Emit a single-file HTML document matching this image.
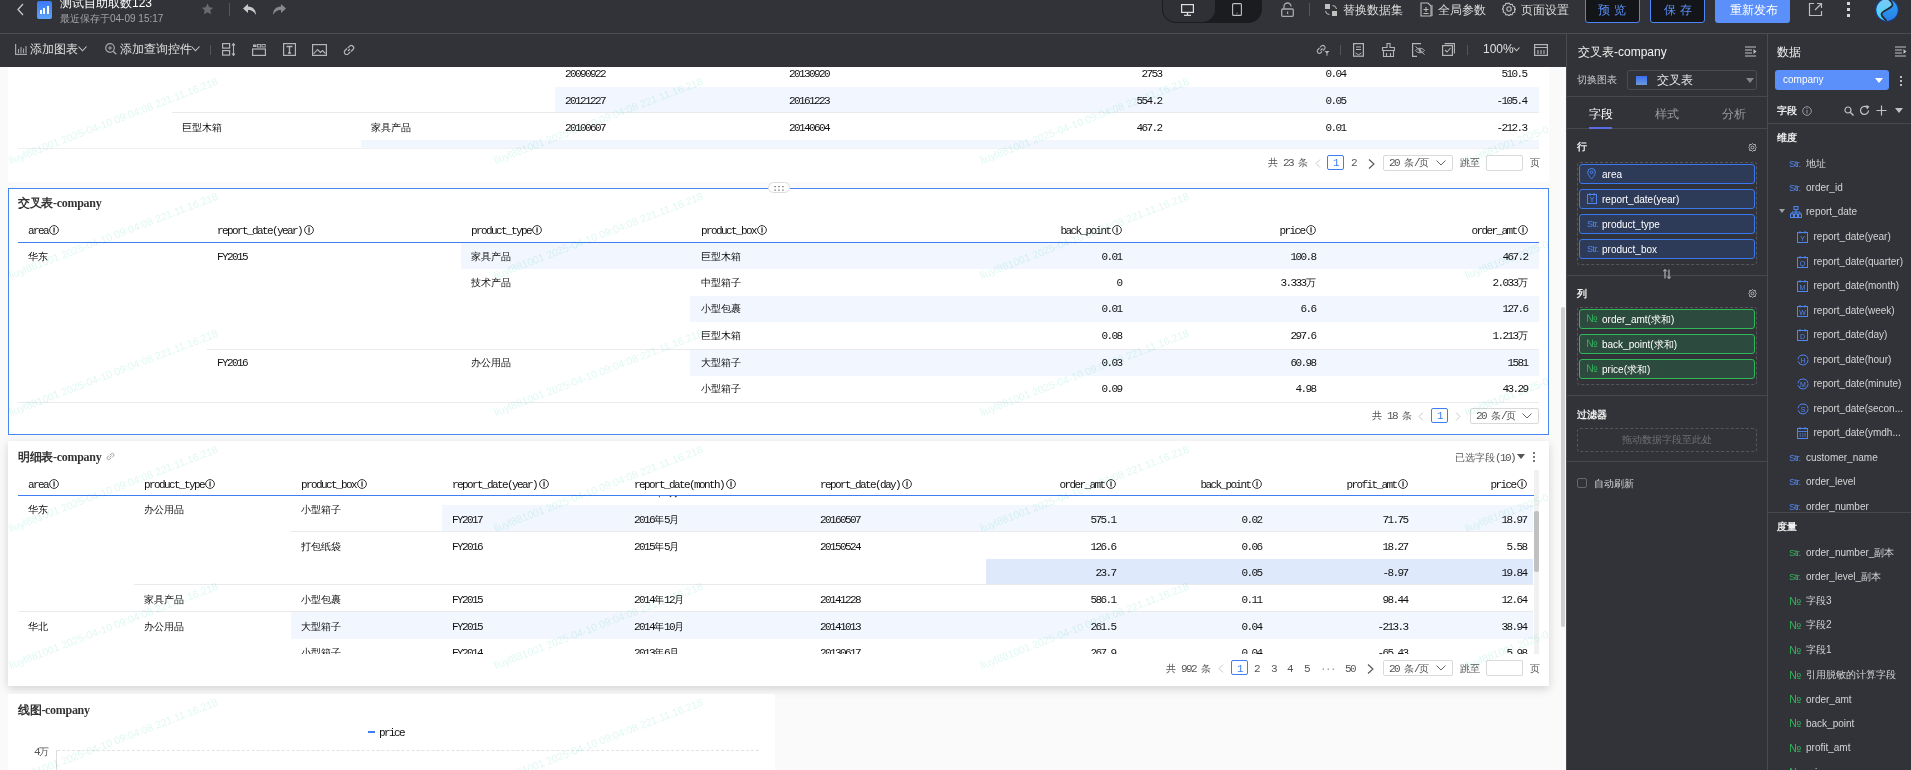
<!DOCTYPE html>
<html><head><meta charset="utf-8">
<style>
*{box-sizing:border-box}
html,body{margin:0;padding:0}
body{width:1911px;height:770px;overflow:hidden;position:relative;background:#fafafa;font-family:"Liberation Sans",sans-serif}
.a{position:absolute}
.top{left:0;top:0;width:1911px;height:33px;background:#323338}
.hsep{left:0;top:33px;width:1911px;height:1px;background:#4c4d52}
.tool{left:0;top:34px;width:1566px;height:33px;background:#323338}
.wt{color:#e6e6e6;font-size:12px;line-height:14px;white-space:nowrap}
.gt{color:#bdbdbd}
.canvas{left:0;top:67px;width:1566px;height:703px;background:#fafafa;overflow:hidden}
.p1{left:1566px;top:34px;width:202px;height:736px;background:#323338;border-left:1px solid #4c4d52;border-right:1px solid #4c4d52}
.p2{left:1768px;top:34px;width:143px;height:736px;background:#323338}
.card{background:#fff}
.m{font-family:"Liberation Mono",monospace;font-size:11px;letter-spacing:-1.6px;color:#111;white-space:nowrap;line-height:12px}
.m .c, .c{letter-spacing:0}
.r{text-align:right}
.stripe{background:#f2f6fe}
.line{background:#e8e9ec;height:1px}
.hd{color:#111}
.pg{color:#555}
.wm{mix-blend-mode:multiply;font-family:"Liberation Sans",sans-serif;font-size:10.5px;line-height:10px;white-space:nowrap;color:#e0f8f3;transform:rotate(-21deg);transform-origin:0 100%}
.cj{font-size:10px;letter-spacing:0}
.ttl{font-family:"Liberation Serif",serif;font-weight:bold;font-size:12px;line-height:12px;color:#333;white-space:nowrap;letter-spacing:-0.3px}
</style></head><body>
<!-- TOP BAR -->
<div class="a top"></div>
<div class="a hsep"></div>
<div class="a tool"></div>
<!-- top bar content -->
<svg class="a" style="left:16px;top:3px" width="9" height="13" viewBox="0 0 9 13"><polyline points="7,1 2,6.5 7,12" fill="none" stroke="#c8c8c8" stroke-width="1.3"/></svg>
<div class="a" style="left:37px;top:1px;width:15px;height:18px;border-radius:2px;background:linear-gradient(#3b79f6,#5ba3fb)"></div>
<div class="a" style="left:40px;top:10px;width:2px;height:4px;background:#fff"></div>
<div class="a" style="left:43px;top:8px;width:2px;height:6px;background:#fff"></div>
<div class="a" style="left:46.5px;top:6px;width:2px;height:8px;background:#fff"></div>
<div class="a wt" style="left:60px;top:-4px;font-size:12px;line-height:14px;color:#fff">测试自助取数123</div>
<div class="a wt" style="left:60px;top:12.5px;font-size:10px;line-height:12px;color:#a3a3a6">最近保存于04-09 15:17</div>
<svg class="a" style="left:201px;top:3px" width="13" height="12" viewBox="0 0 24 23"><path d="M12 1l3.3 7 7.7.9-5.7 5.2 1.6 7.6L12 17.9l-6.9 3.8 1.6-7.6L1 8.9l7.7-.9z" fill="#6a6b70"/></svg>
<div class="a" style="left:229px;top:3px;width:1px;height:13px;background:#55565b"></div>
<svg class="a" style="left:242px;top:3px" width="15" height="13" viewBox="0 0 15 13"><path d="M6 1L1 5.5 6 10V7c4 0 6 1.5 8 5 0-5-3-8.5-8-8.5z" fill="#c9c9cc"/></svg>
<svg class="a" style="left:272px;top:3px" width="15" height="13" viewBox="0 0 15 13"><path d="M9 1l5 4.5L9 10V7c-4 0-6 1.5-8 5 0-5 3-8.5 8-8.5z" fill="#88898d"/></svg>
<!-- device toggle -->
<div class="a" style="left:1162px;top:-12px;width:100px;height:35px;border-radius:14px;background:#1b1c1f"></div>
<div class="a" style="left:1163px;top:-12px;width:52px;height:34px;border-radius:13px;background:#2f3035"></div>
<svg class="a" style="left:1181px;top:4px" width="13" height="12" viewBox="0 0 13 12"><rect x="0.6" y="0.6" width="11.8" height="7.8" fill="none" stroke="#e0e0e0" stroke-width="1.2"/><line x1="6.5" y1="8.5" x2="6.5" y2="11" stroke="#e0e0e0" stroke-width="1.2"/><line x1="3" y1="11.3" x2="10" y2="11.3" stroke="#e0e0e0" stroke-width="1.2"/></svg>
<svg class="a" style="left:1232px;top:3px" width="10" height="13" viewBox="0 0 10 13"><rect x="0.6" y="0.6" width="8.8" height="11.8" rx="1" fill="none" stroke="#c0c0c0" stroke-width="1.1"/><circle cx="5" cy="10" r="0.6" fill="#c0c0c0"/></svg>
<svg class="a" style="left:1281px;top:2px" width="13" height="15" viewBox="0 0 13 15"><path d="M3 7V4.5a3.5 3.5 0 0 1 7 0" fill="none" stroke="#a9a9ad" stroke-width="1.3"/><rect x="0.7" y="7" width="11.6" height="7.3" rx="1" fill="none" stroke="#a9a9ad" stroke-width="1.3"/><rect x="6" y="9.5" width="1.2" height="2.5" fill="#a9a9ad"/></svg>
<div class="a" style="left:1309px;top:3px;width:1px;height:13px;background:#55565b"></div>
<svg class="a" style="left:1324px;top:3px" width="14" height="14" viewBox="0 0 14 14"><rect x="1" y="1" width="5" height="5" fill="#c0c0c0"/><rect x="8" y="8" width="5" height="5" fill="#c0c0c0"/><path d="M8.5 2.5a4 4 0 0 1 4 3.5M5.5 11.5a4 4 0 0 1-4-3.5" fill="none" stroke="#c0c0c0" stroke-width="1"/></svg>
<div class="a wt" style="left:1343px;top:3px;color:#dcdcdc">替换数据集</div>
<svg class="a" style="left:1420px;top:2px" width="13" height="15" viewBox="0 0 13 15"><path d="M1 1h7l3 3v10H1z" fill="none" stroke="#bdbdbd" stroke-width="1.1"/><path d="M12 3v11" stroke="#bdbdbd" stroke-width="1"/><path d="M6 5v5M3.5 7.5h5M3.5 11.5h5" stroke="#bdbdbd" stroke-width="1"/></svg>
<div class="a wt" style="left:1438px;top:3px;color:#dcdcdc">全局参数</div>
<svg class="a" style="left:1502px;top:2px" width="14" height="14" viewBox="0 0 14 14"><path d="M7 1l1.3 1.6 2-.3.6 1.9 1.9.7-.3 2L14 7l-1.5 1.2.3 2-1.9.6-.7 1.9-2-.3L7 14l-1.2-1.5-2 .3-.6-1.9-1.9-.7.3-2L0 7l1.5-1.2-.3-2 1.9-.6.7-1.9 2 .3z" fill="none" stroke="#bdbdbd" stroke-width="1.1"/><circle cx="7" cy="7" r="2.2" fill="none" stroke="#bdbdbd" stroke-width="1.1"/></svg>
<div class="a wt" style="left:1521px;top:3px;color:#dcdcdc">页面设置</div>
<div class="a" style="left:1585px;top:-6px;width:55px;height:29px;border:1px solid #4d86f7;border-radius:3px;background:#141518"></div>
<div class="a wt" style="left:1598px;top:3px;color:#5a8ff8;letter-spacing:4px;font-size:12px">预览</div>
<div class="a" style="left:1650px;top:-6px;width:55px;height:29px;border:1px solid #4d86f7;border-radius:3px;background:#141518"></div>
<div class="a wt" style="left:1664px;top:3px;color:#5a8ff8;letter-spacing:4px;font-size:12px">保存</div>
<div class="a" style="left:1715px;top:-6px;width:75px;height:29px;border-radius:3px;background:#5b8ff9"></div>
<div class="a wt" style="left:1730px;top:3px;color:#fff">重新发布</div>
<svg class="a" style="left:1808px;top:2px" width="15" height="15" viewBox="0 0 15 15"><path d="M6 1.5H1.5v12h12V9" fill="none" stroke="#bdbdbd" stroke-width="1.2"/><path d="M7 8l6.5-6.5M9 1.5h4.5V6" fill="none" stroke="#bdbdbd" stroke-width="1.2"/></svg>
<div class="a" style="left:1847px;top:2px;width:3px;height:3px;background:#d8d8d8"></div>
<div class="a" style="left:1847px;top:8px;width:3px;height:3px;background:#d8d8d8"></div>
<div class="a" style="left:1847px;top:14px;width:3px;height:3px;background:#d8d8d8"></div>
<svg class="a" style="left:1875px;top:-2px" width="24" height="24" viewBox="0 0 24 24"><defs><linearGradient id="lg1" x1="0" y1="0" x2="0" y2="1"><stop offset="0" stop-color="#7fc8f5"/><stop offset="1" stop-color="#3fd8f8"/></linearGradient><linearGradient id="lg2" x1="0" y1="0" x2="0" y2="1"><stop offset="0" stop-color="#2aa7f4"/><stop offset="1" stop-color="#2a7fe8"/></linearGradient></defs><circle cx="12" cy="12" r="11.8" fill="#1d3f8f"/><circle cx="12" cy="12" r="10.7" fill="url(#lg2)"/><path d="M13 1.3C15 2.5 19 5 17 8C15 11 6 13 6.5 16.5C7 19 9 20.5 11.5 22.7A10.7 10.7 0 0 1 13 1.3Z" fill="url(#lg1)"/><path d="M13 0.8C15 2.3 19 5 17 8C15 11 6 13 6.5 16.5C7 19 9 20.5 11.5 22.5" fill="none" stroke="#26272b" stroke-width="1.7"/></svg>


<!-- toolbar row -->
<svg class="a" style="left:15px;top:44px" width="12" height="11" viewBox="0 0 12 11"><path d="M0.6 0v10.4H12" fill="none" stroke="#a6a6aa" stroke-width="1.2"/><path d="M3.5 5v4M6 3v6M8.5 4.5v4.5M11 2v7" stroke="#a6a6aa" stroke-width="1.1"/></svg>
<div class="a wt" style="left:30px;top:42px;color:#e0e0e0">添加图表</div>
<svg class="a" style="left:78px;top:46px" width="9" height="6" viewBox="0 0 9 6"><polyline points="0.5,0.5 4.5,4.8 8.5,0.5" fill="none" stroke="#c8c8c8" stroke-width="1.1"/></svg>
<svg class="a" style="left:105px;top:43px" width="12" height="12" viewBox="0 0 12 12"><circle cx="5" cy="5" r="4.3" fill="none" stroke="#a6a6aa" stroke-width="1.2"/><line x1="8.2" y1="8.2" x2="11.3" y2="11.3" stroke="#a6a6aa" stroke-width="1.3"/><path d="M5 3v4M3 5h4" stroke="#a6a6aa" stroke-width="1"/></svg>
<div class="a wt" style="left:120px;top:42px;color:#e0e0e0">添加查询控件</div>
<svg class="a" style="left:191px;top:46px" width="9" height="6" viewBox="0 0 9 6"><polyline points="0.5,0.5 4.5,4.8 8.5,0.5" fill="none" stroke="#c8c8c8" stroke-width="1.1"/></svg>
<div class="a" style="left:210px;top:45px;width:1px;height:10px;background:#55565b"></div>
<svg class="a" style="left:222px;top:43px" width="14" height="13" viewBox="0 0 14 13"><rect x="0.6" y="0.6" width="7" height="4.5" fill="none" stroke="#b5b5b8" stroke-width="1.2"/><rect x="0.6" y="7.6" width="7" height="4.5" fill="none" stroke="#b5b5b8" stroke-width="1.2"/><path d="M11.5 0.5v12M10 2.5l1.5-2 1.5 2M10 10.5l1.5 2 1.5-2" fill="none" stroke="#b5b5b8" stroke-width="1.1"/></svg>
<svg class="a" style="left:252px;top:44px" width="14" height="12" viewBox="0 0 14 12"><rect x="0.6" y="5" width="12.8" height="6.4" fill="none" stroke="#b5b5b8" stroke-width="1.2"/><rect x="1" y="0.5" width="3.5" height="2.5" fill="#b5b5b8"/><rect x="5.5" y="0.5" width="3.2" height="2.5" fill="none" stroke="#b5b5b8" stroke-width="0.9"/><rect x="10" y="0.5" width="3.2" height="2.5" fill="none" stroke="#b5b5b8" stroke-width="0.9"/></svg>
<svg class="a" style="left:283px;top:43px" width="13" height="13" viewBox="0 0 13 13"><rect x="0.6" y="0.6" width="11.8" height="11.8" fill="none" stroke="#b5b5b8" stroke-width="1.2"/><path d="M3.5 3.5h6M6.5 3.5v6.5M5 10h3" fill="none" stroke="#b5b5b8" stroke-width="1.3"/></svg>
<svg class="a" style="left:312px;top:44px" width="15" height="12" viewBox="0 0 15 12"><rect x="0.6" y="0.6" width="13.8" height="10.8" fill="none" stroke="#b5b5b8" stroke-width="1.2"/><path d="M1.5 10l4-4.5 3 3 2-2 3 3" fill="none" stroke="#b5b5b8" stroke-width="1.1"/></svg>
<svg class="a" style="left:342px;top:43px" width="14" height="14" viewBox="0 0 14 14"><path d="M6 8l2-2M5 5.5L3 7.5a2.3 2.3 0 0 0 3.3 3.3l2-2M9 8.5l2-2a2.3 2.3 0 0 0-3.3-3.3l-2 2" fill="none" stroke="#b5b5b8" stroke-width="1.2"/></svg>

<svg class="a" style="left:1315px;top:43px" width="15" height="13" viewBox="0 0 15 13"><path d="M5.5 7.5l2-2M4.5 5L2.5 7a2.2 2.2 0 0 0 3 3l1.5-1.5M8 7.5l1.8-1.8a2.2 2.2 0 0 0-3-3L5 4.3" fill="none" stroke="#b5b5b8" stroke-width="1.1"/><path d="M9.5 8h5l-2 2.3v2.5h-1v-2.5z" fill="#b5b5b8"/></svg>
<div class="a" style="left:1340px;top:45px;width:1px;height:10px;background:#55565b"></div>
<svg class="a" style="left:1353px;top:43px" width="11" height="14" viewBox="0 0 11 14"><rect x="0.6" y="0.6" width="9.8" height="12.6" fill="none" stroke="#b5b5b8" stroke-width="1.2"/><path d="M3 4h5M3 6.5h5M2.5 10l3 1.8 3-1.8" fill="none" stroke="#b5b5b8" stroke-width="1"/></svg>
<svg class="a" style="left:1382px;top:43px" width="13" height="14" viewBox="0 0 13 14"><path d="M5 0.5h3v4h4.4v3H0.6v-3H5zM1.5 7.5v6h10v-6M4.5 10v3.5M8.5 10v3.5" fill="none" stroke="#b5b5b8" stroke-width="1.1"/></svg>
<svg class="a" style="left:1412px;top:43px" width="14" height="14" viewBox="0 0 14 14"><path d="M9 0.6H0.6v12.8H5" fill="none" stroke="#b5b5b8" stroke-width="1.2"/><path d="M3.5 7.5c2.5-3 6.5-3 9 0-2.5 3-6.5 3-9 0z" fill="none" stroke="#b5b5b8" stroke-width="1"/><circle cx="8" cy="7.5" r="1.3" fill="#b5b5b8"/><line x1="3.5" y1="3.5" x2="12.5" y2="11.5" stroke="#b5b5b8" stroke-width="1"/></svg>
<svg class="a" style="left:1442px;top:43px" width="13" height="13" viewBox="0 0 13 13"><rect x="0.6" y="2.6" width="9.8" height="9.8" fill="none" stroke="#b5b5b8" stroke-width="1.2"/><path d="M2.6 0.6h9.8v9.8" fill="none" stroke="#b5b5b8" stroke-width="1.1"/><path d="M3 7l2 2 3.5-4" fill="none" stroke="#b5b5b8" stroke-width="1.1"/></svg>
<div class="a" style="left:1467px;top:45px;width:1px;height:10px;background:#55565b"></div>
<div class="a wt" style="left:1483px;top:42px;color:#e0e0e0;font-size:12px">100%</div>
<svg class="a" style="left:1513px;top:47px" width="7" height="5" viewBox="0 0 7 5"><polyline points="0.5,0.5 3.5,3.8 6.5,0.5" fill="none" stroke="#c8c8c8" stroke-width="1.1"/></svg>
<svg class="a" style="left:1534px;top:44px" width="14" height="12" viewBox="0 0 14 12"><rect x="0.6" y="0.6" width="12.8" height="10.8" fill="none" stroke="#b5b5b8" stroke-width="1.2"/><path d="M0.6 3.5h12.8M4 6v4M7 6v4M10 6v4" stroke="#b5b5b8" stroke-width="1.1"/></svg>
<div class="a" style="left:0;top:67px;width:1566px;height:703px;overflow:hidden;background:#fafafa"><div class="a" style="left:0;top:-67px;width:1566px;height:770px">
<div class="a" style="left:8px;top:40px;width:1541px;height:142px;background:#fff;"></div>
<div class="a" style="left:555px;top:87px;width:984px;height:26px;background:#f2f6fe;"></div>
<div class="a" style="left:172px;top:112px;width:1367px;height:1px;background:#e9eaed;"></div>
<div class="a" style="left:361px;top:140px;width:1178px;height:8px;background:#f2f6fe;"></div>
<div class="a" style="left:18px;top:148px;width:1521px;height:1px;background:#f0f0f2;"></div>
<div class="a m" style="left:565px;top:68px;">20090922</div>
<div class="a m" style="left:789px;top:68px;">20130920</div>
<div class="a m" style="left:1161.5px;top:68px;transform:translateX(-100%);">2753</div>
<div class="a m" style="left:1345.5px;top:68px;transform:translateX(-100%);">0.04</div>
<div class="a m" style="left:1526.5px;top:68px;transform:translateX(-100%);">510.5</div>
<div class="a m" style="left:565px;top:94.5px;">20121227</div>
<div class="a m" style="left:789px;top:94.5px;">20161223</div>
<div class="a m" style="left:1161.5px;top:94.5px;transform:translateX(-100%);">554.2</div>
<div class="a m" style="left:1345.5px;top:94.5px;transform:translateX(-100%);">0.05</div>
<div class="a m" style="left:1526.5px;top:94.5px;transform:translateX(-100%);">-105.4</div>
<div class="a m" style="left:182px;top:121.5px;"><span class="cj">巨型木箱</span></div>
<div class="a m" style="left:371px;top:121.5px;"><span class="cj">家具产品</span></div>
<div class="a m" style="left:565px;top:121.5px;">20100607</div>
<div class="a m" style="left:789px;top:121.5px;">20140604</div>
<div class="a m" style="left:1161.5px;top:121.5px;transform:translateX(-100%);">467.2</div>
<div class="a m" style="left:1345.5px;top:121.5px;transform:translateX(-100%);">0.01</div>
<div class="a m" style="left:1526.5px;top:121.5px;transform:translateX(-100%);">-212.3</div>
<div class="a m pg" style="left:1268px;top:157px;"><span class="cj">共</span>&nbsp;23&nbsp;<span class="cj">条</span></div>
<svg class="a" style="left:1315px;top:159px" width="6" height="9" viewBox="0 0 6 9"><polyline points="5,0.5 1,4.5 5,8.5" fill="none" stroke="#c8c8c8" stroke-width="1"/></svg>
<div class="a" style="left:1327px;top:155px;width:17px;height:15px;border:1px solid #3d7ef2;border-radius:2px"></div>
<div class="a m pg" style="left:1333px;top:157px;color:#3d7ef2">1</div>
<div class="a m pg" style="left:1351px;top:157px;">2</div>
<svg class="a" style="left:1368px;top:159px" width="7" height="10" viewBox="0 0 7 10"><polyline points="1,0.5 6,5 1,9.5" fill="none" stroke="#555" stroke-width="1.1"/></svg>
<div class="a" style="left:1383px;top:155px;width:70px;height:16px;border:1px solid #d9d9d9;border-radius:2px;background:#fff"></div>
<div class="a m pg" style="left:1389px;top:157px;">20&nbsp;<span class="cj">条</span>/<span class="cj">页</span></div>
<svg class="a" style="left:1436px;top:160px" width="10" height="6" viewBox="0 0 10 6"><polyline points="0.5,0.5 5,5 9.5,0.5" fill="none" stroke="#666" stroke-width="1"/></svg>
<div class="a m pg" style="left:1460px;top:157px;"><span class="cj">跳至</span></div>
<div class="a" style="left:1486px;top:155px;width:37px;height:16px;border:1px solid #d9d9d9;border-radius:2px;background:#fff"></div>
<div class="a m pg" style="left:1530px;top:157px;"><span class="cj">页</span></div>
<div class="a" style="left:8px;top:188px;width:1541px;height:247px;background:#fff;border:1px solid #4a86f0"></div>
<div class="a ttl" style="left:18px;top:197px;">交叉表-company</div>
<div class="a m hd" style="left:28px;top:225px;">area<span style="letter-spacing:0"><svg width="10" height="10" viewBox="0 0 10 10" style="vertical-align:-1px;margin-left:1px"><circle cx="5" cy="5" r="4.4" fill="none" stroke="#333" stroke-width="1"/><rect x="4.4" y="2.4" width="1.3" height="5.2" fill="#333"/></svg></span></div>
<div class="a m hd" style="left:217px;top:225px;">report_date(year)<span style="letter-spacing:0"><svg width="10" height="10" viewBox="0 0 10 10" style="vertical-align:-1px;margin-left:2px"><circle cx="5" cy="5" r="4.4" fill="none" stroke="#333" stroke-width="1"/><rect x="4.4" y="2.4" width="1.3" height="5.2" fill="#333"/></svg></span></div>
<div class="a m hd" style="left:471px;top:225px;">product_type<span style="letter-spacing:0"><svg width="10" height="10" viewBox="0 0 10 10" style="vertical-align:-1px;margin-left:1px"><circle cx="5" cy="5" r="4.4" fill="none" stroke="#333" stroke-width="1"/><rect x="4.4" y="2.4" width="1.3" height="5.2" fill="#333"/></svg></span></div>
<div class="a m hd" style="left:701px;top:225px;">product_box<span style="letter-spacing:0"><svg width="10" height="10" viewBox="0 0 10 10" style="vertical-align:-1px;margin-left:1px"><circle cx="5" cy="5" r="4.4" fill="none" stroke="#333" stroke-width="1"/><rect x="4.4" y="2.4" width="1.3" height="5.2" fill="#333"/></svg></span></div>
<div class="a m hd" style="left:1121.5px;top:225px;transform:translateX(-100%);">back_point<span style="letter-spacing:0"><svg width="10" height="10" viewBox="0 0 10 10" style="vertical-align:-1px;margin-left:1px"><circle cx="5" cy="5" r="4.4" fill="none" stroke="#333" stroke-width="1"/><rect x="4.4" y="2.4" width="1.3" height="5.2" fill="#333"/></svg></span></div>
<div class="a m hd" style="left:1315.5px;top:225px;transform:translateX(-100%);">price<span style="letter-spacing:0"><svg width="10" height="10" viewBox="0 0 10 10" style="vertical-align:-1px;margin-left:1px"><circle cx="5" cy="5" r="4.4" fill="none" stroke="#333" stroke-width="1"/><rect x="4.4" y="2.4" width="1.3" height="5.2" fill="#333"/></svg></span></div>
<div class="a m hd" style="left:1527.5px;top:225px;transform:translateX(-100%);">order_amt<span style="letter-spacing:0"><svg width="10" height="10" viewBox="0 0 10 10" style="vertical-align:-1px;margin-left:1px"><circle cx="5" cy="5" r="4.4" fill="none" stroke="#333" stroke-width="1"/><rect x="4.4" y="2.4" width="1.3" height="5.2" fill="#333"/></svg></span></div>
<div class="a" style="left:18px;top:242px;width:1521px;height:1px;background:#3d7ef2;"></div>
<div class="a" style="left:461px;top:243px;width:1078px;height:26px;background:#f2f6fe;"></div>
<div class="a" style="left:690px;top:296px;width:849px;height:26px;background:#f2f6fe;"></div>
<div class="a" style="left:690px;top:349px;width:849px;height:27px;background:#f2f6fe;"></div>
<div class="a" style="left:207px;top:348.5px;width:1332px;height:1px;background:#e9eaed;"></div>
<div class="a" style="left:18px;top:401.5px;width:1521px;height:1px;background:#e9eaed;"></div>
<div class="a m" style="left:28px;top:250.5px;"><span class="cj">华东</span></div>
<div class="a m" style="left:217px;top:250.5px;">FY2015</div>
<div class="a m" style="left:217px;top:356.5px;">FY2016</div>
<div class="a m" style="left:471px;top:250.5px;"><span class="cj">家具产品</span></div>
<div class="a m" style="left:471px;top:276.5px;"><span class="cj">技术产品</span></div>
<div class="a m" style="left:471px;top:356.5px;"><span class="cj">办公用品</span></div>
<div class="a m" style="left:701px;top:250.5px;"><span class="cj">巨型木箱</span></div>
<div class="a m" style="left:1121.5px;top:250.5px;transform:translateX(-100%);">0.01</div>
<div class="a m" style="left:1315.5px;top:250.5px;transform:translateX(-100%);">100.8</div>
<div class="a m" style="left:1527.5px;top:250.5px;transform:translateX(-100%);">467.2</div>
<div class="a m" style="left:701px;top:276.5px;"><span class="cj">中型箱子</span></div>
<div class="a m" style="left:1121.5px;top:276.5px;transform:translateX(-100%);">0</div>
<div class="a m" style="left:1315.5px;top:276.5px;transform:translateX(-100%);">3.333<span class="cj">万</span></div>
<div class="a m" style="left:1527.5px;top:276.5px;transform:translateX(-100%);">2.033<span class="cj">万</span></div>
<div class="a m" style="left:701px;top:303px;"><span class="cj">小型包裹</span></div>
<div class="a m" style="left:1121.5px;top:303px;transform:translateX(-100%);">0.01</div>
<div class="a m" style="left:1315.5px;top:303px;transform:translateX(-100%);">6.6</div>
<div class="a m" style="left:1527.5px;top:303px;transform:translateX(-100%);">127.6</div>
<div class="a m" style="left:701px;top:330px;"><span class="cj">巨型木箱</span></div>
<div class="a m" style="left:1121.5px;top:330px;transform:translateX(-100%);">0.08</div>
<div class="a m" style="left:1315.5px;top:330px;transform:translateX(-100%);">297.6</div>
<div class="a m" style="left:1527.5px;top:330px;transform:translateX(-100%);">1.213<span class="cj">万</span></div>
<div class="a m" style="left:701px;top:356.5px;"><span class="cj">大型箱子</span></div>
<div class="a m" style="left:1121.5px;top:356.5px;transform:translateX(-100%);">0.03</div>
<div class="a m" style="left:1315.5px;top:356.5px;transform:translateX(-100%);">60.98</div>
<div class="a m" style="left:1527.5px;top:356.5px;transform:translateX(-100%);">1581</div>
<div class="a m" style="left:701px;top:383px;"><span class="cj">小型箱子</span></div>
<div class="a m" style="left:1121.5px;top:383px;transform:translateX(-100%);">0.09</div>
<div class="a m" style="left:1315.5px;top:383px;transform:translateX(-100%);">4.98</div>
<div class="a m" style="left:1527.5px;top:383px;transform:translateX(-100%);">43.29</div>
<div class="a m pg" style="left:1372px;top:410px;"><span class="cj">共</span>&nbsp;18&nbsp;<span class="cj">条</span></div>
<svg class="a" style="left:1418px;top:412px" width="6" height="9" viewBox="0 0 6 9"><polyline points="5,0.5 1,4.5 5,8.5" fill="none" stroke="#c8c8c8" stroke-width="1"/></svg>
<div class="a" style="left:1431px;top:408px;width:17px;height:15px;border:1px solid #3d7ef2;border-radius:2px"></div>
<div class="a m pg" style="left:1437px;top:410px;color:#3d7ef2">1</div>
<svg class="a" style="left:1455px;top:412px" width="6" height="9" viewBox="0 0 6 9"><polyline points="1,0.5 5,4.5 1,8.5" fill="none" stroke="#c8c8c8" stroke-width="1"/></svg>
<div class="a" style="left:1470px;top:408px;width:69px;height:16px;border:1px solid #d9d9d9;border-radius:2px;background:#fff"></div>
<div class="a m pg" style="left:1476px;top:410px;">20&nbsp;<span class="cj">条</span>/<span class="cj">页</span></div>
<svg class="a" style="left:1522px;top:413px" width="10" height="6" viewBox="0 0 10 6"><polyline points="0.5,0.5 5,5 9.5,0.5" fill="none" stroke="#666" stroke-width="1"/></svg>
<div class="a" style="left:768px;top:182px;width:22px;height:11px;border:1px solid #dcdcdc;border-radius:6px;background:#fff"></div>
<svg class="a" style="left:774px;top:185.8px" width="10" height="5" viewBox="0 0 10 5"><g fill="#555"><rect x="0.5" y="0" width="1.2" height="1.2"/><rect x="4.4" y="0" width="1.2" height="1.2"/><rect x="8.3" y="0" width="1.2" height="1.2"/><rect x="0.5" y="3.5" width="1.2" height="1.2"/><rect x="4.4" y="3.5" width="1.2" height="1.2"/><rect x="8.3" y="3.5" width="1.2" height="1.2"/></g></svg>
<div class="a" style="left:8px;top:441px;width:1541px;height:245px;background:#fff;box-shadow:0 3px 9px rgba(0,0,0,0.16)"></div>
<div class="a ttl" style="left:18px;top:451px;">明细表-company</div>
<svg class="a" style="left:106px;top:452px" width="9" height="9" viewBox="0 0 9 9"><path d="M3.5 5.5l2-2M3 3.5L1.5 5a1.5 1.5 0 0 0 2.2 2.2L5 6M6 5.5l1.5-1.5a1.5 1.5 0 0 0-2.2-2.2L4 3" fill="none" stroke="#999" stroke-width="0.9"/></svg>
<div class="a m pg" style="left:1455px;top:452px;"><span class="cj">已选字段</span>(10)</div>
<svg class="a" style="left:1517px;top:454px" width="8" height="5" viewBox="0 0 8 5"><polygon points="0,0 8,0 4,5" fill="#555"/></svg>
<div class="a" style="left:1533px;top:452px;width:1.5px;height:1.5px;background:#777;"></div>
<div class="a" style="left:1533px;top:456px;width:1.5px;height:1.5px;background:#777;"></div>
<div class="a" style="left:1533px;top:460px;width:1.5px;height:1.5px;background:#777;"></div>
<div class="a" style="left:8px;top:495px;width:1541px;height:159px;overflow:hidden"><div class="a" style="left:-8px;top:-495px;width:1566px;height:770px">
<div class="a" style="left:442px;top:505px;width:1091px;height:26.5px;background:#f2f6fe;"></div>
<div class="a" style="left:291px;top:531px;width:1242px;height:1px;background:#e9eaed;"></div>
<div class="a" style="left:986px;top:559px;width:547px;height:25.5px;background:#dfe9fc;"></div>
<div class="a" style="left:134px;top:584px;width:1399px;height:1px;background:#e9eaed;"></div>
<div class="a" style="left:18px;top:611px;width:1515px;height:1px;background:#e9eaed;"></div>
<div class="a" style="left:291px;top:611.5px;width:1242px;height:27px;background:#f2f6fe;"></div>
<div class="a" style="left:18px;top:654px;width:1515px;height:1px;background:#f0f0f2;"></div>
<div class="a m" style="left:452px;top:487px;">FY2017</div>
<div class="a m" style="left:634px;top:487px;">2016<span class="cj">年</span>5<span class="cj">月</span></div>
<div class="a m" style="left:820px;top:487px;">20160507</div>
<div class="a m" style="left:452px;top:513.5px;">FY2017</div>
<div class="a m" style="left:634px;top:513.5px;">2016<span class="cj">年</span>5<span class="cj">月</span></div>
<div class="a m" style="left:820px;top:513.5px;">20160507</div>
<div class="a m" style="left:1115.5px;top:513.5px;transform:translateX(-100%);">575.1</div>
<div class="a m" style="left:1261.5px;top:513.5px;transform:translateX(-100%);">0.02</div>
<div class="a m" style="left:1407.5px;top:513.5px;transform:translateX(-100%);">71.75</div>
<div class="a m" style="left:1526.5px;top:513.5px;transform:translateX(-100%);">18.97</div>
<div class="a m" style="left:301px;top:540.5px;"><span class="cj">打包纸袋</span></div>
<div class="a m" style="left:452px;top:540.5px;">FY2016</div>
<div class="a m" style="left:634px;top:540.5px;">2015<span class="cj">年</span>5<span class="cj">月</span></div>
<div class="a m" style="left:820px;top:540.5px;">20150524</div>
<div class="a m" style="left:1115.5px;top:540.5px;transform:translateX(-100%);">126.6</div>
<div class="a m" style="left:1261.5px;top:540.5px;transform:translateX(-100%);">0.06</div>
<div class="a m" style="left:1407.5px;top:540.5px;transform:translateX(-100%);">18.27</div>
<div class="a m" style="left:1526.5px;top:540.5px;transform:translateX(-100%);">5.58</div>
<div class="a m" style="left:1115.5px;top:567px;transform:translateX(-100%);">23.7</div>
<div class="a m" style="left:1261.5px;top:567px;transform:translateX(-100%);">0.05</div>
<div class="a m" style="left:1407.5px;top:567px;transform:translateX(-100%);">-8.97</div>
<div class="a m" style="left:1526.5px;top:567px;transform:translateX(-100%);">19.84</div>
<div class="a m" style="left:144px;top:594px;"><span class="cj">家具产品</span></div>
<div class="a m" style="left:301px;top:594px;"><span class="cj">小型包裹</span></div>
<div class="a m" style="left:452px;top:594px;">FY2015</div>
<div class="a m" style="left:634px;top:594px;">2014<span class="cj">年</span>12<span class="cj">月</span></div>
<div class="a m" style="left:820px;top:594px;">20141228</div>
<div class="a m" style="left:1115.5px;top:594px;transform:translateX(-100%);">586.1</div>
<div class="a m" style="left:1261.5px;top:594px;transform:translateX(-100%);">0.11</div>
<div class="a m" style="left:1407.5px;top:594px;transform:translateX(-100%);">98.44</div>
<div class="a m" style="left:1526.5px;top:594px;transform:translateX(-100%);">12.64</div>
<div class="a m" style="left:28px;top:620.5px;"><span class="cj">华北</span></div>
<div class="a m" style="left:144px;top:620.5px;"><span class="cj">办公用品</span></div>
<div class="a m" style="left:301px;top:620.5px;"><span class="cj">大型箱子</span></div>
<div class="a m" style="left:452px;top:620.5px;">FY2015</div>
<div class="a m" style="left:634px;top:620.5px;">2014<span class="cj">年</span>10<span class="cj">月</span></div>
<div class="a m" style="left:820px;top:620.5px;">20141013</div>
<div class="a m" style="left:1115.5px;top:620.5px;transform:translateX(-100%);">261.5</div>
<div class="a m" style="left:1261.5px;top:620.5px;transform:translateX(-100%);">0.04</div>
<div class="a m" style="left:1407.5px;top:620.5px;transform:translateX(-100%);">-213.3</div>
<div class="a m" style="left:1526.5px;top:620.5px;transform:translateX(-100%);">38.94</div>
<div class="a m" style="left:301px;top:647px;"><span class="cj">小型箱子</span></div>
<div class="a m" style="left:452px;top:647px;">FY2014</div>
<div class="a m" style="left:634px;top:647px;">2013<span class="cj">年</span>6<span class="cj">月</span></div>
<div class="a m" style="left:820px;top:647px;">20130617</div>
<div class="a m" style="left:1115.5px;top:647px;transform:translateX(-100%);">267.9</div>
<div class="a m" style="left:1261.5px;top:647px;transform:translateX(-100%);">0.04</div>
<div class="a m" style="left:1407.5px;top:647px;transform:translateX(-100%);">-65.43</div>
<div class="a m" style="left:1526.5px;top:647px;transform:translateX(-100%);">5.98</div>
<div class="a m" style="left:28px;top:504px;"><span class="cj">华东</span></div>
<div class="a m" style="left:144px;top:504px;"><span class="cj">办公用品</span></div>
<div class="a m" style="left:301px;top:504px;"><span class="cj">小型箱子</span></div>
</div></div>
<div class="a m hd" style="left:28px;top:478.5px;">area<span style="letter-spacing:0"><svg width="10" height="10" viewBox="0 0 10 10" style="vertical-align:-1px;margin-left:1px"><circle cx="5" cy="5" r="4.4" fill="none" stroke="#333" stroke-width="1"/><rect x="4.4" y="2.4" width="1.3" height="5.2" fill="#333"/></svg></span></div>
<div class="a m hd" style="left:144px;top:478.5px;">product_type<span style="letter-spacing:0"><svg width="10" height="10" viewBox="0 0 10 10" style="vertical-align:-1px;margin-left:1px"><circle cx="5" cy="5" r="4.4" fill="none" stroke="#333" stroke-width="1"/><rect x="4.4" y="2.4" width="1.3" height="5.2" fill="#333"/></svg></span></div>
<div class="a m hd" style="left:301px;top:478.5px;">product_box<span style="letter-spacing:0"><svg width="10" height="10" viewBox="0 0 10 10" style="vertical-align:-1px;margin-left:1px"><circle cx="5" cy="5" r="4.4" fill="none" stroke="#333" stroke-width="1"/><rect x="4.4" y="2.4" width="1.3" height="5.2" fill="#333"/></svg></span></div>
<div class="a m hd" style="left:452px;top:478.5px;">report_date(year)<span style="letter-spacing:0"><svg width="10" height="10" viewBox="0 0 10 10" style="vertical-align:-1px;margin-left:2px"><circle cx="5" cy="5" r="4.4" fill="none" stroke="#333" stroke-width="1"/><rect x="4.4" y="2.4" width="1.3" height="5.2" fill="#333"/></svg></span></div>
<div class="a m hd" style="left:634px;top:478.5px;">report_date(month)<span style="letter-spacing:0"><svg width="10" height="10" viewBox="0 0 10 10" style="vertical-align:-1px;margin-left:2px"><circle cx="5" cy="5" r="4.4" fill="none" stroke="#333" stroke-width="1"/><rect x="4.4" y="2.4" width="1.3" height="5.2" fill="#333"/></svg></span></div>
<div class="a m hd" style="left:820px;top:478.5px;">report_date(day)<span style="letter-spacing:0"><svg width="10" height="10" viewBox="0 0 10 10" style="vertical-align:-1px;margin-left:2px"><circle cx="5" cy="5" r="4.4" fill="none" stroke="#333" stroke-width="1"/><rect x="4.4" y="2.4" width="1.3" height="5.2" fill="#333"/></svg></span></div>
<div class="a m hd" style="left:1115.5px;top:478.5px;transform:translateX(-100%);">order_amt<span style="letter-spacing:0"><svg width="10" height="10" viewBox="0 0 10 10" style="vertical-align:-1px;margin-left:1px"><circle cx="5" cy="5" r="4.4" fill="none" stroke="#333" stroke-width="1"/><rect x="4.4" y="2.4" width="1.3" height="5.2" fill="#333"/></svg></span></div>
<div class="a m hd" style="left:1261.5px;top:478.5px;transform:translateX(-100%);">back_point<span style="letter-spacing:0"><svg width="10" height="10" viewBox="0 0 10 10" style="vertical-align:-1px;margin-left:1px"><circle cx="5" cy="5" r="4.4" fill="none" stroke="#333" stroke-width="1"/><rect x="4.4" y="2.4" width="1.3" height="5.2" fill="#333"/></svg></span></div>
<div class="a m hd" style="left:1407.5px;top:478.5px;transform:translateX(-100%);">profit_amt<span style="letter-spacing:0"><svg width="10" height="10" viewBox="0 0 10 10" style="vertical-align:-1px;margin-left:1px"><circle cx="5" cy="5" r="4.4" fill="none" stroke="#333" stroke-width="1"/><rect x="4.4" y="2.4" width="1.3" height="5.2" fill="#333"/></svg></span></div>
<div class="a m hd" style="left:1526.5px;top:478.5px;transform:translateX(-100%);">price<span style="letter-spacing:0"><svg width="10" height="10" viewBox="0 0 10 10" style="vertical-align:-1px;margin-left:1px"><circle cx="5" cy="5" r="4.4" fill="none" stroke="#333" stroke-width="1"/><rect x="4.4" y="2.4" width="1.3" height="5.2" fill="#333"/></svg></span></div>
<div class="a" style="left:18px;top:495px;width:1521px;height:1px;background:#3d7ef2;"></div>
<div class="a" style="left:1534px;top:470px;width:5px;height:184px;background:#f1f1f1;"></div>
<div class="a" style="left:1534px;top:511px;width:5px;height:61px;background:#c1c1c1;border-radius:2px"></div>
<div class="a m pg" style="left:1166px;top:663px;"><span class="cj">共</span>&nbsp;992&nbsp;<span class="cj">条</span></div>
<svg class="a" style="left:1218px;top:664px" width="6" height="9" viewBox="0 0 6 9"><polyline points="5,0.5 1,4.5 5,8.5" fill="none" stroke="#c8c8c8" stroke-width="1"/></svg>
<div class="a" style="left:1231px;top:660px;width:17px;height:15px;border:1px solid #3d7ef2;border-radius:2px"></div>
<div class="a m pg" style="left:1237px;top:663px;color:#3d7ef2">1</div>
<div class="a m pg" style="left:1254px;top:663px;">2</div>
<div class="a m pg" style="left:1271px;top:663px;">3</div>
<div class="a m pg" style="left:1287px;top:663px;">4</div>
<div class="a m pg" style="left:1304px;top:663px;">5</div>
<div class="a m pg" style="left:1320px;top:663px;color:#999">···</div>
<div class="a m pg" style="left:1345px;top:663px;">50</div>
<svg class="a" style="left:1367px;top:664px" width="7" height="10" viewBox="0 0 7 10"><polyline points="1,0.5 6,5 1,9.5" fill="none" stroke="#555" stroke-width="1.1"/></svg>
<div class="a" style="left:1383px;top:660px;width:70px;height:16px;border:1px solid #d9d9d9;border-radius:2px;background:#fff"></div>
<div class="a m pg" style="left:1389px;top:663px;">20&nbsp;<span class="cj">条</span>/<span class="cj">页</span></div>
<svg class="a" style="left:1436px;top:665px" width="10" height="6" viewBox="0 0 10 6"><polyline points="0.5,0.5 5,5 9.5,0.5" fill="none" stroke="#666" stroke-width="1"/></svg>
<div class="a m pg" style="left:1460px;top:663px;"><span class="cj">跳至</span></div>
<div class="a" style="left:1486px;top:660px;width:37px;height:16px;border:1px solid #d9d9d9;border-radius:2px;background:#fff"></div>
<div class="a m pg" style="left:1530px;top:663px;"><span class="cj">页</span></div>
<div class="a" style="left:8px;top:694px;width:767px;height:100px;background:#fff;"></div>
<div class="a ttl" style="left:18px;top:704px;">线图-company</div>
<div class="a" style="left:368px;top:731px;width:7px;height:2px;background:#3d7ef2;"></div>
<div class="a m" style="left:379px;top:727px;">price</div>
<div class="a m" style="left:34px;top:746px;color:#555">4<span class="cj">万</span></div>
<div class="a" style="left:56px;top:750px;width:1px;height:30px;background:#ddd;"></div>
<div class="a" style="left:57px;top:750px;width:702px;height:0;border-top:1px dashed #e3e3e3"></div>
<div class="a" style="left:8px;top:67px;width:1541px;height:115px;overflow:hidden;pointer-events:none">
<div class="a wm" style="left:2.8000000000000007px;top:-50px">liuyl881001 2025-04-10 09:04:08 221.11.16.218</div>
<div class="a wm" style="left:488.3px;top:-50px">liuyl881001 2025-04-10 09:04:08 221.11.16.218</div>
<div class="a wm" style="left:973.8px;top:-50px">liuyl881001 2025-04-10 09:04:08 221.11.16.218</div>
<div class="a wm" style="left:1459.3px;top:-50px">liuyl881001 2025-04-10 09:04:08 221.11.16.218</div>
<div class="a wm" style="left:2.8000000000000007px;top:87.6px">liuyl881001 2025-04-10 09:04:08 221.11.16.218</div>
<div class="a wm" style="left:488.3px;top:87.6px">liuyl881001 2025-04-10 09:04:08 221.11.16.218</div>
<div class="a wm" style="left:973.8px;top:87.6px">liuyl881001 2025-04-10 09:04:08 221.11.16.218</div>
<div class="a wm" style="left:1459.3px;top:87.6px">liuyl881001 2025-04-10 09:04:08 221.11.16.218</div>
</div>
<div class="a" style="left:9px;top:189px;width:1539px;height:245px;overflow:hidden;pointer-events:none">
<div class="a wm" style="left:1.8000000000000007px;top:80.69999999999999px">liuyl881001 2025-04-10 09:04:08 221.11.16.218</div>
<div class="a wm" style="left:487.3px;top:80.69999999999999px">liuyl881001 2025-04-10 09:04:08 221.11.16.218</div>
<div class="a wm" style="left:972.8px;top:80.69999999999999px">liuyl881001 2025-04-10 09:04:08 221.11.16.218</div>
<div class="a wm" style="left:1458.3px;top:80.69999999999999px">liuyl881001 2025-04-10 09:04:08 221.11.16.218</div>
<div class="a wm" style="left:1.8000000000000007px;top:218.3px">liuyl881001 2025-04-10 09:04:08 221.11.16.218</div>
<div class="a wm" style="left:487.3px;top:218.3px">liuyl881001 2025-04-10 09:04:08 221.11.16.218</div>
<div class="a wm" style="left:972.8px;top:218.3px">liuyl881001 2025-04-10 09:04:08 221.11.16.218</div>
<div class="a wm" style="left:1458.3px;top:218.3px">liuyl881001 2025-04-10 09:04:08 221.11.16.218</div>
</div>
<div class="a" style="left:8px;top:441px;width:1541px;height:245px;overflow:hidden;pointer-events:none">
<div class="a wm" style="left:2.8000000000000007px;top:81.79999999999995px">liuyl881001 2025-04-10 09:04:08 221.11.16.218</div>
<div class="a wm" style="left:488.3px;top:81.79999999999995px">liuyl881001 2025-04-10 09:04:08 221.11.16.218</div>
<div class="a wm" style="left:973.8px;top:81.79999999999995px">liuyl881001 2025-04-10 09:04:08 221.11.16.218</div>
<div class="a wm" style="left:1459.3px;top:81.79999999999995px">liuyl881001 2025-04-10 09:04:08 221.11.16.218</div>
<div class="a wm" style="left:2.8000000000000007px;top:218.5px">liuyl881001 2025-04-10 09:04:08 221.11.16.218</div>
<div class="a wm" style="left:488.3px;top:218.5px">liuyl881001 2025-04-10 09:04:08 221.11.16.218</div>
<div class="a wm" style="left:973.8px;top:218.5px">liuyl881001 2025-04-10 09:04:08 221.11.16.218</div>
<div class="a wm" style="left:1459.3px;top:218.5px">liuyl881001 2025-04-10 09:04:08 221.11.16.218</div>
</div>
<div class="a" style="left:8px;top:694px;width:767px;height:76px;overflow:hidden;pointer-events:none">
<div class="a wm" style="left:2.8000000000000007px;top:82px">liuyl881001 2025-04-10 09:04:08 221.11.16.218</div>
<div class="a wm" style="left:488.3px;top:82px">liuyl881001 2025-04-10 09:04:08 221.11.16.218</div>
</div>
<div class="a" style="left:1561px;top:307px;width:4px;height:320px;background:#cfcfcf;border-radius:2px"></div>
</div></div>
<!-- panels -->
<div class="a" style="left:1566px;top:34px;width:345px;height:736px;background:#323338"></div>
<div class="a" style="left:1566px;top:34px;width:1px;height:736px;background:#4a4b51;"></div>
<div class="a" style="left:1767px;top:34px;width:1px;height:736px;background:#4a4b51;"></div>
<div class="a" style="left:1578px;top:43.5px;font-size:12px;line-height:16px;color:#f2f2f2;white-space:nowrap;">交叉表-company</div>
<svg class="a" style="left:1745px;top:46px" width="12" height="11" viewBox="0 0 12 11"><path d="M0 1h11M0 4h7M0 7h7M0 10h11" stroke="#bfc0c4" stroke-width="1.1"/><polygon points="8.5,3 11.5,5.5 8.5,8" fill="#bfc0c4"/></svg>
<div class="a" style="left:1577px;top:72.5px;font-size:10px;line-height:14px;color:#c8c8cc;white-space:nowrap;">切换图表</div>
<div class="a" style="left:1627px;top:70px;width:130px;height:20px;border:1px solid #4b4c52;border-radius:3px"></div>
<div class="a" style="left:1636px;top:76px;width:11px;height:9px;background:linear-gradient(#3a6df5,#6b9ad8)"></div>
<div class="a" style="left:1657px;top:72.0px;font-size:12px;line-height:16px;color:#e6e6e6;white-space:nowrap;">交叉表</div>
<svg class="a" style="left:1746px;top:78px" width="8" height="5" viewBox="0 0 8 5"><polygon points="0,0 8,0 4,5" fill="#85868b"/></svg>
<div class="a" style="left:1567px;top:96px;width:200px;height:1px;background:#47484e;"></div>
<div class="a" style="left:1589px;top:105.5px;font-size:12px;line-height:16px;color:#ffffff;white-space:nowrap;">字段</div>
<div class="a" style="left:1655px;top:105.5px;font-size:12px;line-height:16px;color:#9a9ba0;white-space:nowrap;">样式</div>
<div class="a" style="left:1722px;top:105.5px;font-size:12px;line-height:16px;color:#9a9ba0;white-space:nowrap;">分析</div>
<div class="a" style="left:1567px;top:128px;width:200px;height:1px;background:#47484e;"></div>
<div class="a" style="left:1589px;top:127px;width:23px;height:2px;background:#5a6de6;"></div>
<div class="a" style="left:1577px;top:140.0px;font-size:10px;line-height:14px;color:#f0f0f0;white-space:nowrap;font-weight:bold">行</div>
<svg class="a" style="left:1748px;top:143px" width="9" height="9" viewBox="0 0 9 9"><path d="M4.5 0.5l1 1h1.8v1.8l1 1.2-1 1.2v1.8H5.5l-1 1-1-1H1.7V5.7l-1-1.2 1-1.2V1.5h1.8z" fill="none" stroke="#c0c0c4" stroke-width="0.9"/><circle cx="4.5" cy="4.5" r="1.4" fill="none" stroke="#c0c0c4" stroke-width="0.9"/></svg>
<div class="a" style="left:1577px;top:162px;width:180px;height:103px;border:1px dashed #55565c;border-radius:3px"></div>
<div class="a" style="left:1579px;top:164px;width:176px;height:20px;background:#2e3b58;border:1px solid #3a78f0;border-radius:3px"></div>
<svg class="a" style="left:1587px;top:164px;margin-top:4px" width="9" height="12" viewBox="0 0 9 12"><path d="M4.5 11S0.7 6.8 0.7 4.3a3.8 3.8 0 0 1 7.6 0C8.3 6.8 4.5 11 4.5 11z" fill="none" stroke="#4f86f2" stroke-width="1"/><circle cx="4.5" cy="4.3" r="1.3" fill="none" stroke="#4f86f2" stroke-width="0.9"/></svg>
<div class="a" style="left:1602px;top:167.7px;font-size:10px;line-height:14px;color:#ffffff;white-space:nowrap;">area</div>
<div class="a" style="left:1579px;top:189px;width:176px;height:20px;background:#2e3b58;border:1px solid #3a78f0;border-radius:3px"></div>
<svg class="a" style="left:1587px;top:189px;margin-top:4px" width="10" height="11" viewBox="0 0 10 11"><rect x="0.5" y="1.5" width="9" height="9" fill="none" stroke="#4f86f2" stroke-width="1"/><path d="M3 0v2.5M7 0v2.5M3.2 4l1.8 2.5L6.8 4M5 6.5V9" fill="none" stroke="#4f86f2" stroke-width="0.9"/></svg>
<div class="a" style="left:1602px;top:192.7px;font-size:10px;line-height:14px;color:#ffffff;white-space:nowrap;">report_date(year)</div>
<div class="a" style="left:1579px;top:214px;width:176px;height:20px;background:#2e3b58;border:1px solid #3a78f0;border-radius:3px"></div>
<div class="a" style="left:1587px;top:214px;margin-top:3px;font-size:9px;line-height:14px;color:#4f86f2;letter-spacing:-0.5px">Str.</div>
<div class="a" style="left:1602px;top:217.7px;font-size:10px;line-height:14px;color:#ffffff;white-space:nowrap;">product_type</div>
<div class="a" style="left:1579px;top:239px;width:176px;height:20px;background:#2e3b58;border:1px solid #3a78f0;border-radius:3px"></div>
<div class="a" style="left:1587px;top:239px;margin-top:3px;font-size:9px;line-height:14px;color:#4f86f2;letter-spacing:-0.5px">Str.</div>
<div class="a" style="left:1602px;top:242.7px;font-size:10px;line-height:14px;color:#ffffff;white-space:nowrap;">product_box</div>
<div class="a" style="left:1567px;top:275px;width:200px;height:1px;background:#47484e;"></div>
<svg class="a" style="left:1663px;top:269px" width="8" height="10" viewBox="0 0 8 10"><path d="M2 9.5V0.5M0 2.5l2-2 2 2M6 0.5v9M4 7.5l2 2 2-2" fill="none" stroke="#c8c8cc" stroke-width="1"/></svg>
<div class="a" style="left:1577px;top:286.5px;font-size:10px;line-height:14px;color:#f0f0f0;white-space:nowrap;font-weight:bold">列</div>
<svg class="a" style="left:1748px;top:289px" width="9" height="9" viewBox="0 0 9 9"><path d="M4.5 0.5l1 1h1.8v1.8l1 1.2-1 1.2v1.8H5.5l-1 1-1-1H1.7V5.7l-1-1.2 1-1.2V1.5h1.8z" fill="none" stroke="#c0c0c4" stroke-width="0.9"/><circle cx="4.5" cy="4.5" r="1.4" fill="none" stroke="#c0c0c4" stroke-width="0.9"/></svg>
<div class="a" style="left:1577px;top:307px;width:180px;height:78px;border:1px dashed #55565c;border-radius:3px"></div>
<div class="a" style="left:1579px;top:309px;width:176px;height:20px;background:#2d4a3f;border:1px solid #2fb95a;border-radius:3px"></div>
<div class="a" style="left:1586px;top:309px;margin-top:2px;font-size:11px;line-height:14px;color:#33b35a;letter-spacing:-0.5px">&#8470;</div>
<div class="a" style="left:1602px;top:312.7px;font-size:10px;line-height:14px;color:#ffffff;white-space:nowrap;">order_amt(求和)</div>
<div class="a" style="left:1579px;top:334px;width:176px;height:20px;background:#2d4a3f;border:1px solid #2fb95a;border-radius:3px"></div>
<div class="a" style="left:1586px;top:334px;margin-top:2px;font-size:11px;line-height:14px;color:#33b35a;letter-spacing:-0.5px">&#8470;</div>
<div class="a" style="left:1602px;top:337.7px;font-size:10px;line-height:14px;color:#ffffff;white-space:nowrap;">back_point(求和)</div>
<div class="a" style="left:1579px;top:359px;width:176px;height:20px;background:#2d4a3f;border:1px solid #2fb95a;border-radius:3px"></div>
<div class="a" style="left:1586px;top:359px;margin-top:2px;font-size:11px;line-height:14px;color:#33b35a;letter-spacing:-0.5px">&#8470;</div>
<div class="a" style="left:1602px;top:362.7px;font-size:10px;line-height:14px;color:#ffffff;white-space:nowrap;">price(求和)</div>
<div class="a" style="left:1567px;top:395px;width:200px;height:1px;background:#47484e;"></div>
<div class="a" style="left:1577px;top:407.5px;font-size:10px;line-height:14px;color:#f0f0f0;white-space:nowrap;font-weight:bold">过滤器</div>
<div class="a" style="left:1577px;top:428px;width:180px;height:24px;border:1px dashed #55565c;border-radius:3px"></div>
<div class="a" style="left:1622px;top:433.0px;font-size:10px;line-height:14px;color:#6e6f74;white-space:nowrap;">拖动数据字段至此处</div>
<div class="a" style="left:1567px;top:461px;width:200px;height:1px;background:#47484e;"></div>
<div class="a" style="left:1577px;top:478px;width:10px;height:10px;border:1px solid #66676c;border-radius:2px"></div>
<div class="a" style="left:1594px;top:476.5px;font-size:10px;line-height:14px;color:#d6d6d8;white-space:nowrap;">自动刷新</div>
<div class="a" style="left:1777px;top:43.5px;font-size:12px;line-height:16px;color:#f2f2f2;white-space:nowrap;">数据</div>
<svg class="a" style="left:1895px;top:46px" width="12" height="11" viewBox="0 0 12 11"><path d="M0 1h11M0 4h7M0 7h7M0 10h11" stroke="#bfc0c4" stroke-width="1.1"/><polygon points="8.5,3 11.5,5.5 8.5,8" fill="#bfc0c4"/></svg>
<div class="a" style="left:1775px;top:70px;width:114px;height:20px;background:#5b8ff9;border-radius:3px"></div>
<div class="a" style="left:1783px;top:73.0px;font-size:10px;line-height:14px;color:#ffffff;white-space:nowrap;">company</div>
<svg class="a" style="left:1875px;top:78px" width="8" height="5" viewBox="0 0 8 5"><polygon points="0,0 8,0 4,5" fill="#ffffff"/></svg>
<div class="a" style="left:1900px;top:76px;width:1.5px;height:1.5px;background:#bbb;"></div>
<div class="a" style="left:1900px;top:80px;width:1.5px;height:1.5px;background:#bbb;"></div>
<div class="a" style="left:1900px;top:84px;width:1.5px;height:1.5px;background:#bbb;"></div>
<div class="a" style="left:1777px;top:103.5px;font-size:10px;line-height:14px;color:#eaeaea;white-space:nowrap;font-weight:bold">字段</div>
<svg class="a" style="left:1802px;top:106px" width="10" height="10" viewBox="0 0 10 10"><circle cx="5" cy="5" r="4.3" fill="none" stroke="#999a9f" stroke-width="1"/><path d="M5 4v3.5" stroke="#999a9f" stroke-width="1"/><circle cx="5" cy="2.6" r="0.6" fill="#999a9f"/></svg>
<svg class="a" style="left:1844px;top:106px" width="10" height="10" viewBox="0 0 10 10"><circle cx="4" cy="4" r="3" fill="none" stroke="#c0c1c5" stroke-width="1.2"/><path d="M6.3 6.3L9.5 9.5" stroke="#c0c1c5" stroke-width="1.4"/></svg>
<svg class="a" style="left:1859px;top:105px" width="11" height="11" viewBox="0 0 11 11"><path d="M9.5 5.5A4 4 0 1 1 8 2.3" fill="none" stroke="#c0c1c5" stroke-width="1.2"/><polygon points="7,0 10.5,1.5 8,4.5" fill="#c0c1c5"/></svg>
<svg class="a" style="left:1876px;top:105px" width="11" height="11" viewBox="0 0 11 11"><path d="M5.5 0.5v10M0.5 5.5h10" stroke="#c0c1c5" stroke-width="1.2"/></svg>
<svg class="a" style="left:1895px;top:108px" width="8" height="5" viewBox="0 0 8 5"><polygon points="0,0 8,0 4,5" fill="#c0c1c5"/></svg>
<div class="a" style="left:1768px;top:123px;width:143px;height:1px;background:#47484e;"></div>
<div class="a" style="left:1777px;top:131.0px;font-size:10px;line-height:14px;color:#f0f0f0;white-space:nowrap;font-weight:bold">维度</div>
<div class="a" style="left:1789px;top:157.0px;font-size:9.5px;line-height:14px;color:#4f86f2;letter-spacing:-0.7px">Str.</div>
<div class="a" style="left:1806px;top:156.5px;font-size:10px;line-height:14px;color:#d4d4d6;white-space:nowrap;">地址</div>
<div class="a" style="left:1789px;top:181.0px;font-size:9.5px;line-height:14px;color:#4f86f2;letter-spacing:-0.7px">Str.</div>
<div class="a" style="left:1806px;top:180.5px;font-size:10px;line-height:14px;color:#d4d4d6;white-space:nowrap;">order_id</div>
<svg class="a" style="left:1779px;top:209px" width="6" height="4" viewBox="0 0 6 4"><polygon points="0,0 6,0 3,4" fill="#a0a1a5"/></svg>
<svg class="a" style="left:1790px;top:206px" width="12" height="12" viewBox="0 0 12 12"><rect x="4" y="0.5" width="4" height="3" fill="none" stroke="#4f86f2" stroke-width="1"/><path d="M6 3.5v2.5M2 6h8M2 6v2M10 6v2M6 6v2" fill="none" stroke="#4f86f2" stroke-width="1"/><rect x="0.5" y="8" width="3" height="3.5" fill="none" stroke="#4f86f2" stroke-width="1"/><rect x="4.5" y="8" width="3" height="3.5" fill="none" stroke="#4f86f2" stroke-width="1"/><rect x="8.5" y="8" width="3" height="3.5" fill="none" stroke="#4f86f2" stroke-width="1"/></svg>
<div class="a" style="left:1806px;top:205.0px;font-size:10px;line-height:14px;color:#d4d4d6;white-space:nowrap;">report_date</div>
<svg class="a" style="left:1797px;top:231px" width="11" height="12" viewBox="0 0 11 12"><rect x="0.5" y="1.5" width="10" height="10" fill="none" stroke="#4f86f2" stroke-width="1"/><path d="M3 0v2.5M8 0v2.5" stroke="#4f86f2" stroke-width="1"/><text x="5.5" y="10" font-size="7" text-anchor="middle" fill="#4f86f2" font-family="Liberation Sans">Y</text></svg>
<div class="a" style="left:1813.5px;top:230.0px;font-size:10px;line-height:14px;color:#d4d4d6;white-space:nowrap;">report_date(year)</div>
<svg class="a" style="left:1797px;top:255.5px" width="11" height="12" viewBox="0 0 11 12"><rect x="0.5" y="1.5" width="10" height="10" fill="none" stroke="#4f86f2" stroke-width="1"/><path d="M3 0v2.5M8 0v2.5" stroke="#4f86f2" stroke-width="1"/><text x="5.5" y="10" font-size="7" text-anchor="middle" fill="#4f86f2" font-family="Liberation Sans">Q</text></svg>
<div class="a" style="left:1813.5px;top:254.5px;font-size:10px;line-height:14px;color:#d4d4d6;white-space:nowrap;">report_date(quarter)</div>
<svg class="a" style="left:1797px;top:279.7px" width="11" height="12" viewBox="0 0 11 12"><rect x="0.5" y="1.5" width="10" height="10" fill="none" stroke="#4f86f2" stroke-width="1"/><path d="M3 0v2.5M8 0v2.5" stroke="#4f86f2" stroke-width="1"/><text x="5.5" y="10" font-size="7" text-anchor="middle" fill="#4f86f2" font-family="Liberation Sans">M</text></svg>
<div class="a" style="left:1813.5px;top:278.7px;font-size:10px;line-height:14px;color:#d4d4d6;white-space:nowrap;">report_date(month)</div>
<svg class="a" style="left:1797px;top:305px" width="11" height="12" viewBox="0 0 11 12"><rect x="0.5" y="1.5" width="10" height="10" fill="none" stroke="#4f86f2" stroke-width="1"/><path d="M3 0v2.5M8 0v2.5" stroke="#4f86f2" stroke-width="1"/><text x="5.5" y="10" font-size="7" text-anchor="middle" fill="#4f86f2" font-family="Liberation Sans">W</text></svg>
<div class="a" style="left:1813.5px;top:304.0px;font-size:10px;line-height:14px;color:#d4d4d6;white-space:nowrap;">report_date(week)</div>
<svg class="a" style="left:1797px;top:328.8px" width="11" height="12" viewBox="0 0 11 12"><rect x="0.5" y="1.5" width="10" height="10" fill="none" stroke="#4f86f2" stroke-width="1"/><path d="M3 0v2.5M8 0v2.5" stroke="#4f86f2" stroke-width="1"/><text x="5.5" y="10" font-size="7" text-anchor="middle" fill="#4f86f2" font-family="Liberation Sans">D</text></svg>
<div class="a" style="left:1813.5px;top:327.8px;font-size:10px;line-height:14px;color:#d4d4d6;white-space:nowrap;">report_date(day)</div>
<svg class="a" style="left:1797px;top:353.7px" width="12" height="12" viewBox="0 0 12 12"><circle cx="6" cy="6" r="5" fill="none" stroke="#4f86f2" stroke-width="1" stroke-dasharray="14 2"/><text x="6" y="8.5" font-size="7" text-anchor="middle" fill="#4f86f2" font-family="Liberation Sans">H</text></svg>
<div class="a" style="left:1813.5px;top:352.7px;font-size:10px;line-height:14px;color:#d4d4d6;white-space:nowrap;">report_date(hour)</div>
<svg class="a" style="left:1797px;top:378px" width="12" height="12" viewBox="0 0 12 12"><circle cx="6" cy="6" r="5" fill="none" stroke="#4f86f2" stroke-width="1" stroke-dasharray="14 2"/><text x="6" y="8.5" font-size="7" text-anchor="middle" fill="#4f86f2" font-family="Liberation Sans">M</text></svg>
<div class="a" style="left:1813.5px;top:377.0px;font-size:10px;line-height:14px;color:#d4d4d6;white-space:nowrap;">report_date(minute)</div>
<svg class="a" style="left:1797px;top:403px" width="12" height="12" viewBox="0 0 12 12"><circle cx="6" cy="6" r="5" fill="none" stroke="#4f86f2" stroke-width="1" stroke-dasharray="14 2"/><text x="6" y="8.5" font-size="7" text-anchor="middle" fill="#4f86f2" font-family="Liberation Sans">S</text></svg>
<div class="a" style="left:1813.5px;top:402.0px;font-size:10px;line-height:14px;color:#d4d4d6;white-space:nowrap;">report_date(secon...</div>
<svg class="a" style="left:1797px;top:427px" width="11" height="12" viewBox="0 0 11 12"><rect x="0.5" y="1.5" width="10" height="10" fill="none" stroke="#4f86f2" stroke-width="1"/><path d="M3 0v2.5M8 0v2.5" stroke="#4f86f2" stroke-width="1"/><text x="5.5" y="10" font-size="7" text-anchor="middle" fill="#4f86f2" font-family="Liberation Sans"></text><path d="M0.5 4.5h10M2.5 7h1.5M5 7h1.5M7.5 7h1.5M2.5 9h1.5M5 9h1.5M7.5 9h1.5" stroke="#4f86f2" stroke-width="0.9"/></svg>
<div class="a" style="left:1813.5px;top:426.0px;font-size:10px;line-height:14px;color:#d4d4d6;white-space:nowrap;">report_date(ymdh...</div>
<div class="a" style="left:1789px;top:451.2px;font-size:9.5px;line-height:14px;color:#4f86f2;letter-spacing:-0.7px">Str.</div>
<div class="a" style="left:1806px;top:450.7px;font-size:10px;line-height:14px;color:#d4d4d6;white-space:nowrap;">customer_name</div>
<div class="a" style="left:1789px;top:475.3px;font-size:9.5px;line-height:14px;color:#4f86f2;letter-spacing:-0.7px">Str.</div>
<div class="a" style="left:1806px;top:474.8px;font-size:10px;line-height:14px;color:#d4d4d6;white-space:nowrap;">order_level</div>
<div class="a" style="left:1789px;top:500.0px;font-size:9.5px;line-height:14px;color:#4f86f2;letter-spacing:-0.7px">Str.</div>
<div class="a" style="left:1806px;top:499.5px;font-size:10px;line-height:14px;color:#d4d4d6;white-space:nowrap;">order_number</div>
<div class="a" style="left:1768px;top:512px;width:143px;height:258px;background:#323338"></div>
<div class="a" style="left:1768px;top:512px;width:143px;height:1px;background:#47484e;"></div>
<div class="a" style="left:1777px;top:520.0px;font-size:10px;line-height:14px;color:#f0f0f0;white-space:nowrap;font-weight:bold">度量</div>
<div class="a" style="left:1789px;top:546.0px;font-size:9.5px;line-height:14px;color:#33b35a;letter-spacing:-0.7px">Str.</div>
<div class="a" style="left:1806px;top:545.5px;font-size:10px;line-height:14px;color:#d4d4d6;white-space:nowrap;">order_number_副本</div>
<div class="a" style="left:1789px;top:570.1px;font-size:9.5px;line-height:14px;color:#33b35a;letter-spacing:-0.7px">Str.</div>
<div class="a" style="left:1806px;top:569.6px;font-size:10px;line-height:14px;color:#d4d4d6;white-space:nowrap;">order_level_副本</div>
<div class="a" style="left:1789px;top:593.8px;font-size:11.5px;line-height:14px;color:#33b35a;letter-spacing:-0.5px">&#8470;</div>
<div class="a" style="left:1806px;top:594.3px;font-size:10px;line-height:14px;color:#d4d4d6;white-space:nowrap;">字段3</div>
<div class="a" style="left:1789px;top:617.9px;font-size:11.5px;line-height:14px;color:#33b35a;letter-spacing:-0.5px">&#8470;</div>
<div class="a" style="left:1806px;top:618.4px;font-size:10px;line-height:14px;color:#d4d4d6;white-space:nowrap;">字段2</div>
<div class="a" style="left:1789px;top:642.8px;font-size:11.5px;line-height:14px;color:#33b35a;letter-spacing:-0.5px">&#8470;</div>
<div class="a" style="left:1806px;top:643.3px;font-size:10px;line-height:14px;color:#d4d4d6;white-space:nowrap;">字段1</div>
<div class="a" style="left:1789px;top:667.5px;font-size:11.5px;line-height:14px;color:#33b35a;letter-spacing:-0.5px">&#8470;</div>
<div class="a" style="left:1806px;top:668.0px;font-size:10px;line-height:14px;color:#d4d4d6;white-space:nowrap;">引用脱敏的计算字段</div>
<div class="a" style="left:1789px;top:692.3px;font-size:11.5px;line-height:14px;color:#33b35a;letter-spacing:-0.5px">&#8470;</div>
<div class="a" style="left:1806px;top:692.8px;font-size:10px;line-height:14px;color:#d4d4d6;white-space:nowrap;">order_amt</div>
<div class="a" style="left:1789px;top:716.1px;font-size:11.5px;line-height:14px;color:#33b35a;letter-spacing:-0.5px">&#8470;</div>
<div class="a" style="left:1806px;top:716.6px;font-size:10px;line-height:14px;color:#d4d4d6;white-space:nowrap;">back_point</div>
<div class="a" style="left:1789px;top:740.8px;font-size:11.5px;line-height:14px;color:#33b35a;letter-spacing:-0.5px">&#8470;</div>
<div class="a" style="left:1806px;top:741.3px;font-size:10px;line-height:14px;color:#d4d4d6;white-space:nowrap;">profit_amt</div>
<div class="a" style="left:1789px;top:765.2px;font-size:11.5px;line-height:14px;color:#33b35a;letter-spacing:-0.5px">&#8470;</div>
<div class="a" style="left:1806px;top:765.7px;font-size:10px;line-height:14px;color:#d4d4d6;white-space:nowrap;">price</div>
</body></html>
